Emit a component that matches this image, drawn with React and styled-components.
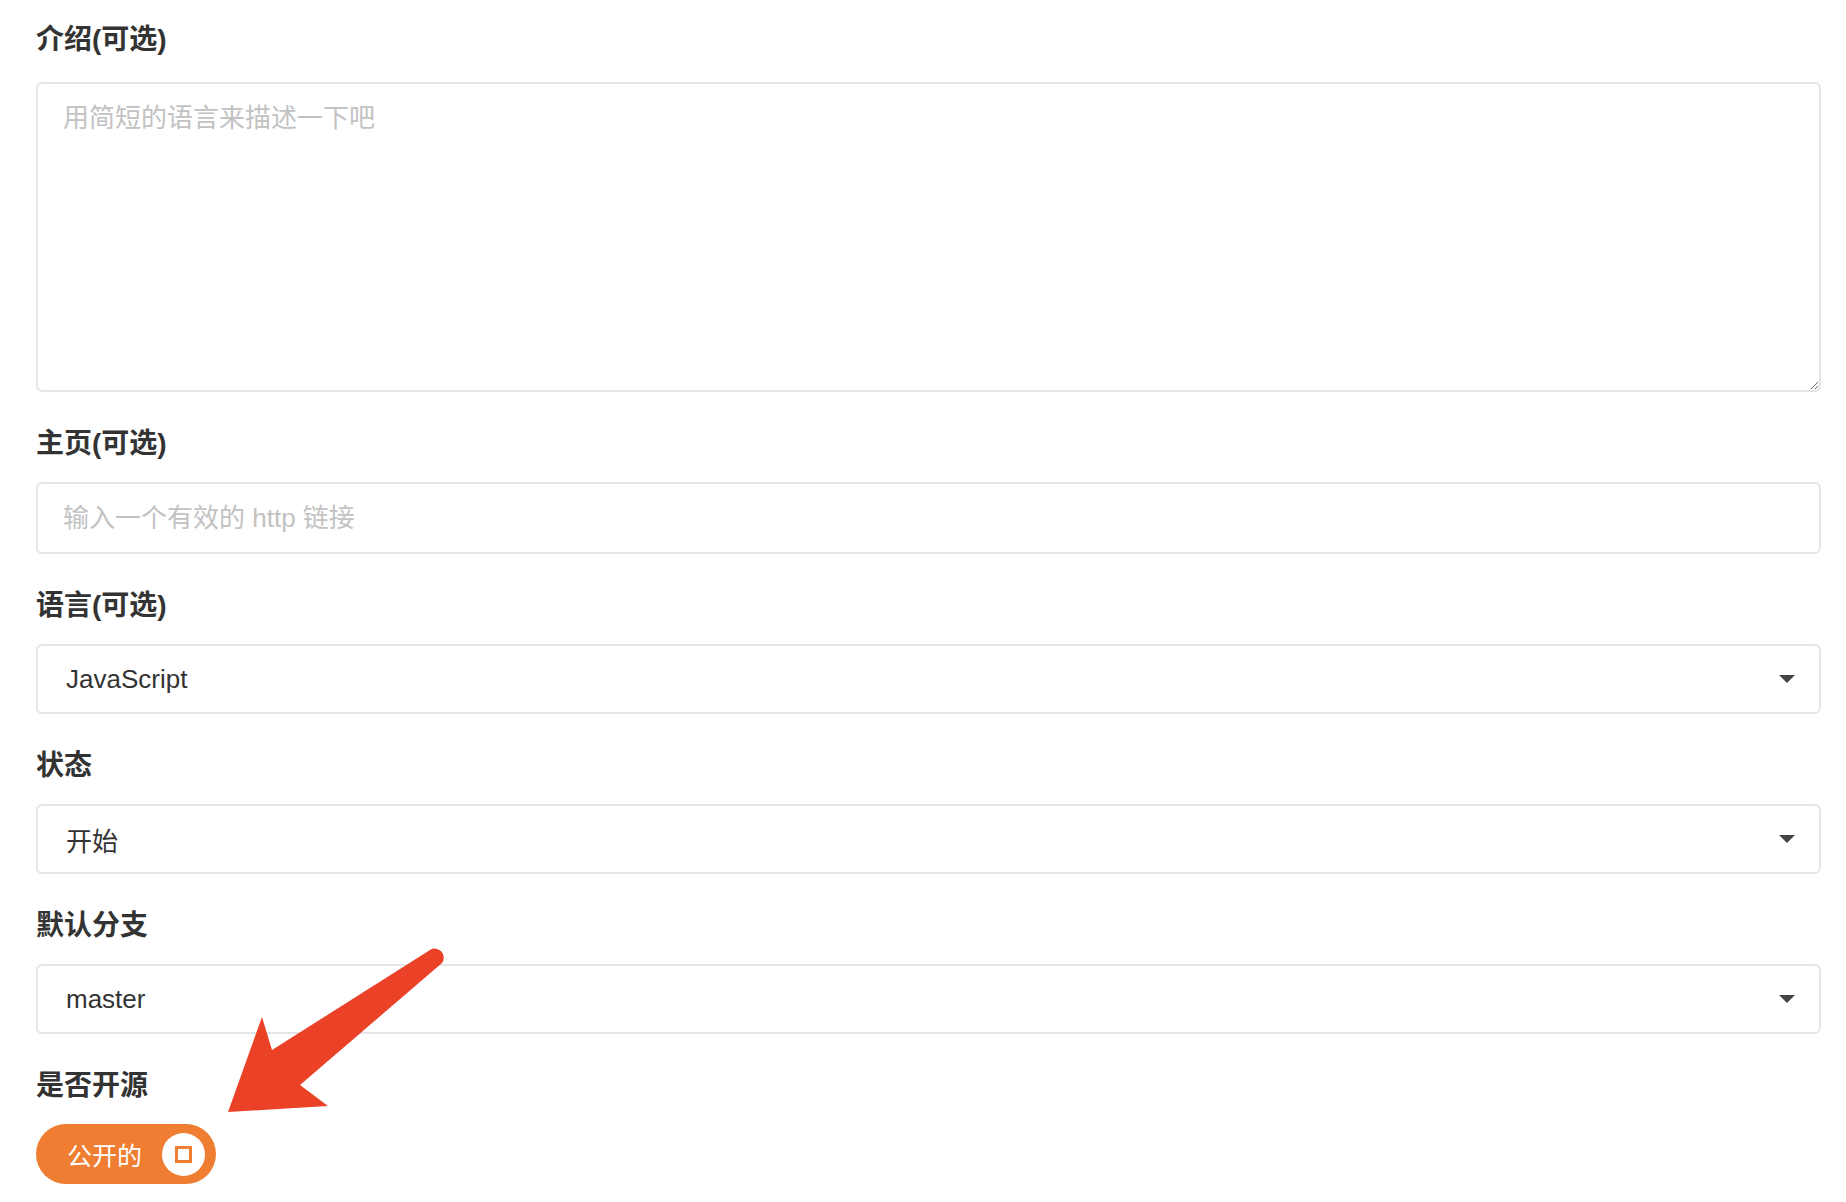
import React from 'react'
import styled, { createGlobalStyle } from 'styled-components'

const GlobalStyle = createGlobalStyle`
  html, body {
    margin: 0;
    padding: 0;
    background: #fff;
  }
  body {
    font-family: "Liberation Sans", "Noto Sans CJK SC", sans-serif;
    color: #333;
  }
`

const Page = styled.div`
  position: relative;
  width: 1846px;
  height: 1202px;
  box-sizing: border-box;
  padding: 20px 25px 0 36px;
  overflow: hidden;
`

const Field = styled.div`
  display: flex;
  flex-direction: column;
  & + & {
    margin-top: 32px;
  }
`

const Label = styled.label`
  font-size: 28px;
  font-weight: 700;
  line-height: 38px;
  color: #333;
  padding-top: 1px;
  margin-bottom: ${p => p.$space || 19}px;
`

const boxBase = `
  box-sizing: border-box;
  width: 100%;
  border: 2px solid #e2e5ea;
  border-radius: 6px;
  background: #fff;
  font-family: "Liberation Sans", "Noto Sans CJK SC", sans-serif;
  font-size: 26px;
  color: #333;
  outline: none;
  &::placeholder {
    color: #c2c2c2;
  }
`

const TextArea = styled.textarea`
  ${boxBase}
  height: 310px;
  padding: 16px 25px;
  line-height: 36px;
  resize: vertical;
  display: block;
`

const Input = styled.input`
  ${boxBase}
  height: 72px;
  padding: 0 25px;
`

const Select = styled.div`
  ${boxBase}
  height: 70px;
  padding: 0 24px 0 28px;
  display: flex;
  align-items: center;
  justify-content: space-between;
  cursor: pointer;
`

const Caret = styled.span`
  width: 0;
  height: 0;
  border-left: 8px solid transparent;
  border-right: 8px solid transparent;
  border-top: 8px solid #444;
`

const Toggle = styled.button`
  display: flex;
  align-items: center;
  justify-content: space-between;
  width: 180px;
  height: 60px;
  box-sizing: border-box;
  padding: 0 11px 0 31px;
  border: none;
  border-radius: 30px;
  background: #ef7e32;
  color: #fff;
  font-family: "Liberation Sans", "Noto Sans CJK SC", sans-serif;
  font-size: 25px;
  cursor: pointer;
`

const Knob = styled.span`
  width: 43px;
  height: 43px;
  border-radius: 50%;
  background: #fff;
  display: flex;
  align-items: center;
  justify-content: center;
`

const KnobMark = styled.span`
  width: 17px;
  height: 17px;
  box-sizing: border-box;
  border: 3px solid #ef7e32;
`

const Pointer = styled.svg`
  position: absolute;
  left: 200px;
  top: 930px;
  width: 260px;
  height: 200px;
  pointer-events: none;
`

const selects = [
  { label: '语言(可选)', value: 'JavaScript' },
  { label: '状态', value: '开始' },
  { label: '默认分支', value: 'master' },
]

export default function App() {
  return (
    <>
      <GlobalStyle />
      <Page>
        <Field>
          <Label $space={23}>介绍(可选)</Label>
          <TextArea placeholder="用简短的语言来描述一下吧" />
        </Field>
        <Field>
          <Label>主页(可选)</Label>
          <Input placeholder="输入一个有效的 http 链接" />
        </Field>
        {selects.map(s => (
          <Field key={s.label}>
            <Label>{s.label}</Label>
            <Select>
              <span>{s.value}</span>
              <Caret />
            </Select>
          </Field>
        ))}
        <Field>
          <Label>是否开源</Label>
          <div>
            <Toggle>
              <span>公开的</span>
              <Knob><KnobMark /></Knob>
            </Toggle>
          </div>
        </Field>
        <Pointer viewBox="0 0 260 200">
          <path
            d="M28 182 L62 87 L72 120 L230 20 A9 9 0 0 1 242 33 L100 155 L128 176 Z"
            fill="#ea4127"
          />
        </Pointer>
      </Page>
    </>
  )
}
